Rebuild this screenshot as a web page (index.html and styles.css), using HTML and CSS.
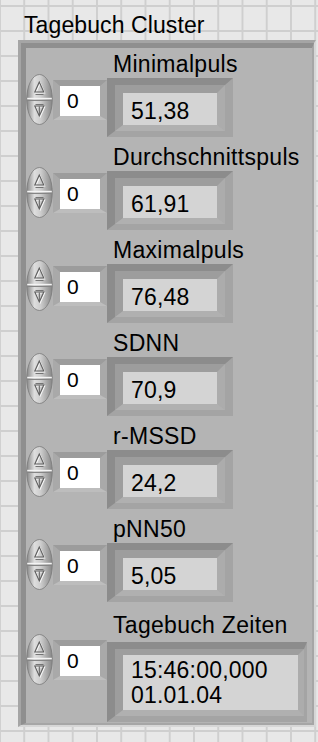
FILE: index.html
```html
<!DOCTYPE html>
<html>

<head>
    <meta charset="UTF-8">
    <meta name="viewport" content="width=device-width, initial-scale=1.0">
    <title>Tagebuch Cluster</title>
    <link rel="stylesheet" href="styles.css">
</head>

<body>

    <div class="cluster-label">Tagebuch Cluster</div>

    <div class="cluster">
        <div class="cluster-in">

            <div class="row">
                <div class="ctrl">
                    <svg class="spin" width="27" height="51" viewBox="0 0 27 51"><use href="#spinner"/></svg>
                    <div class="num"><div class="num-in">0</div></div>
                </div>
                <div class="ind">
                    <div class="ind-label">Minimalpuls</div>
                    <div class="ind-frame"><div class="ind-mid"><div class="ind-box">51,38</div></div></div>
                </div>
            </div>

            <div class="row">
                <div class="ctrl">
                    <svg class="spin" width="27" height="51" viewBox="0 0 27 51"><use href="#spinner"/></svg>
                    <div class="num"><div class="num-in">0</div></div>
                </div>
                <div class="ind">
                    <div class="ind-label">Durchschnittspuls</div>
                    <div class="ind-frame"><div class="ind-mid"><div class="ind-box">61,91</div></div></div>
                </div>
            </div>

            <div class="row">
                <div class="ctrl">
                    <svg class="spin" width="27" height="51" viewBox="0 0 27 51"><use href="#spinner"/></svg>
                    <div class="num"><div class="num-in">0</div></div>
                </div>
                <div class="ind">
                    <div class="ind-label">Maximalpuls</div>
                    <div class="ind-frame"><div class="ind-mid"><div class="ind-box">76,48</div></div></div>
                </div>
            </div>

            <div class="row">
                <div class="ctrl">
                    <svg class="spin" width="27" height="51" viewBox="0 0 27 51"><use href="#spinner"/></svg>
                    <div class="num"><div class="num-in">0</div></div>
                </div>
                <div class="ind">
                    <div class="ind-label">SDNN</div>
                    <div class="ind-frame"><div class="ind-mid"><div class="ind-box">70,9</div></div></div>
                </div>
            </div>

            <div class="row">
                <div class="ctrl">
                    <svg class="spin" width="27" height="51" viewBox="0 0 27 51"><use href="#spinner"/></svg>
                    <div class="num"><div class="num-in">0</div></div>
                </div>
                <div class="ind">
                    <div class="ind-label">r-MSSD</div>
                    <div class="ind-frame"><div class="ind-mid"><div class="ind-box">24,2</div></div></div>
                </div>
            </div>

            <div class="row">
                <div class="ctrl">
                    <svg class="spin" width="27" height="51" viewBox="0 0 27 51"><use href="#spinner"/></svg>
                    <div class="num"><div class="num-in">0</div></div>
                </div>
                <div class="ind">
                    <div class="ind-label">pNN50</div>
                    <div class="ind-frame"><div class="ind-mid"><div class="ind-box">5,05</div></div></div>
                </div>
            </div>

            <div class="row last">
                <div class="ctrl">
                    <svg class="spin" width="27" height="51" viewBox="0 0 27 51"><use href="#spinner"/></svg>
                    <div class="num"><div class="num-in">0</div></div>
                </div>
                <div class="ind">
                    <div class="ind-label">Tagebuch Zeiten</div>
                    <div class="ind-frame wide"><div class="ind-mid"><div class="ind-box">15:46:00,000<br>01.01.04</div></div></div>
                </div>
            </div>

        </div>
    </div>

    <!-- spinner knob, reused in every row -->
    <svg width="0" height="0" class="defs">
        <defs>
            <linearGradient id="knob" x1="0" y1="0" x2="1" y2="0">
                <stop offset="0" stop-color="#858585"/>
                <stop offset="0.3" stop-color="#dedede"/>
                <stop offset="0.55" stop-color="#cdcdcd"/>
                <stop offset="1" stop-color="#868686"/>
            </linearGradient>
            <g id="spinner">
                <ellipse cx="13.5" cy="25.5" rx="12.8" ry="25" fill="url(#knob)" stroke="#7a7a7a" stroke-width="0.8"/>
                <line x1="1.2" y1="24.6" x2="25.8" y2="24.6" stroke="#f4f4f4" stroke-width="1.6"/>
                <line x1="1.2" y1="26.4" x2="25.8" y2="26.4" stroke="#858585" stroke-width="1.2"/>
                <path d="M14.2 9 L9.7 19 L18.7 19 Z" fill="none" stroke="#f6f6f6" stroke-width="1.1"/>
                <path d="M13.3 8 L8.8 18 L17.8 18 Z" fill="none" stroke="#5e5e5e" stroke-width="1.1"/>
                <line x1="9.5" y1="20.5" x2="17.5" y2="20.5" stroke="#6a6a6a" stroke-width="0.9"/>
                <line x1="9.5" y1="30.5" x2="17.5" y2="30.5" stroke="#6a6a6a" stroke-width="0.9"/>
                <path d="M9.7 33 L18.7 33 L14.2 43 Z" fill="none" stroke="#f6f6f6" stroke-width="1.1"/>
                <path d="M8.8 32 L17.8 32 L13.3 42 Z" fill="none" stroke="#5e5e5e" stroke-width="1.1"/>
                <line x1="13.3" y1="32.5" x2="13.3" y2="41" stroke="#5e5e5e" stroke-width="1"/>
            </g>
        </defs>
    </svg>

</body>

</html>
```

FILE: styles.css
```css
* {
    margin: 0;
    padding: 0;
    box-sizing: border-box;
}

body {
    font-family: "Liberation Sans", Arial, sans-serif;
    color: #000;
    background-color: #e8e8e8;
    background-image:
        linear-gradient(to right, #cfcfcf 2px, transparent 2px),
        linear-gradient(to bottom, #cfcfcf 2px, transparent 2px);
    background-size: 24.25px 25px;
    background-position: -1px 5px;
    min-height: 742px;
}

.defs {
    position: absolute;
}

.cluster-label {
    margin: 12px 0 0 24px;
    font-size: 23px;
    line-height: 26px;
    letter-spacing: 0.1px;
}

.cluster {
    margin: 2px 0 0 18px;
    width: 298px;
    height: 687px;
    border-style: solid;
    border-width: 3px 2px 2px 3px;
    border-color: #a5a5a5 #d6d6d6 #d6d6d6 #a5a5a5;
}

.cluster-in {
    height: 100%;
    padding-top: 3px;
    border-style: solid;
    border-width: 5px 2px 2px 5px;
    border-color: #8f8f8f #a6a6a6 #a6a6a6 #8f8f8f;
    background-color: #b4b4b4;
}

.row {
    display: flex;
    height: 93px;
}

.row.last {
    height: auto;
    padding-top: 3px;
}

.ctrl {
    display: flex;
    align-items: center;
    margin-top: 23px;
    height: 51px;
}

.row.last .ctrl {
    margin-top: 22px;
}

.spin {
    display: block;
}

.num {
    width: 54px;
    height: 40px;
    border-style: solid;
    border-width: 6px 7px 4px 7px;
    border-color: #9c9c9c #a9a9a9 #bdbdbd #a9a9a9;
}

.num-in {
    height: 100%;
    background-color: #fff;
    padding: 1px 0 0 7px;
    font-size: 21px;
    line-height: 28px;
}

.ind-label {
    padding-left: 6px;
    font-size: 23px;
    line-height: 26px;
    height: 26px;
    letter-spacing: 0.3px;
    white-space: nowrap;
}

.ind-frame {
    width: 126px;
    height: 59px;
    margin-top: 1px;
    border-style: solid;
    border-width: 7px 8px 6px 8px;
    border-color: #8c8c8c #a4a4a4 #a4a4a4 #8c8c8c;
}

.ind-mid {
    height: 100%;
    border-style: solid;
    border-width: 8px 8px 6px 8px;
    border-color: #9d9d9d #acacac #b0b0b0 #9d9d9d;
}

.ind-box {
    height: 100%;
    background-color: #d4d4d4;
    padding: 5px 0 0 8px;
    font-size: 23px;
    line-height: 26px;
    letter-spacing: 0.2px;
}

.ind-frame.wide {
    width: 200px;
    height: 80px;
    margin-top: 4px;
    border-right-width: 3px;
}

.wide .ind-mid {
    border-width: 6px 6px 6px 8px;
}

.wide .ind-box {
    padding-top: 3px;
    line-height: 25px;
}
```
